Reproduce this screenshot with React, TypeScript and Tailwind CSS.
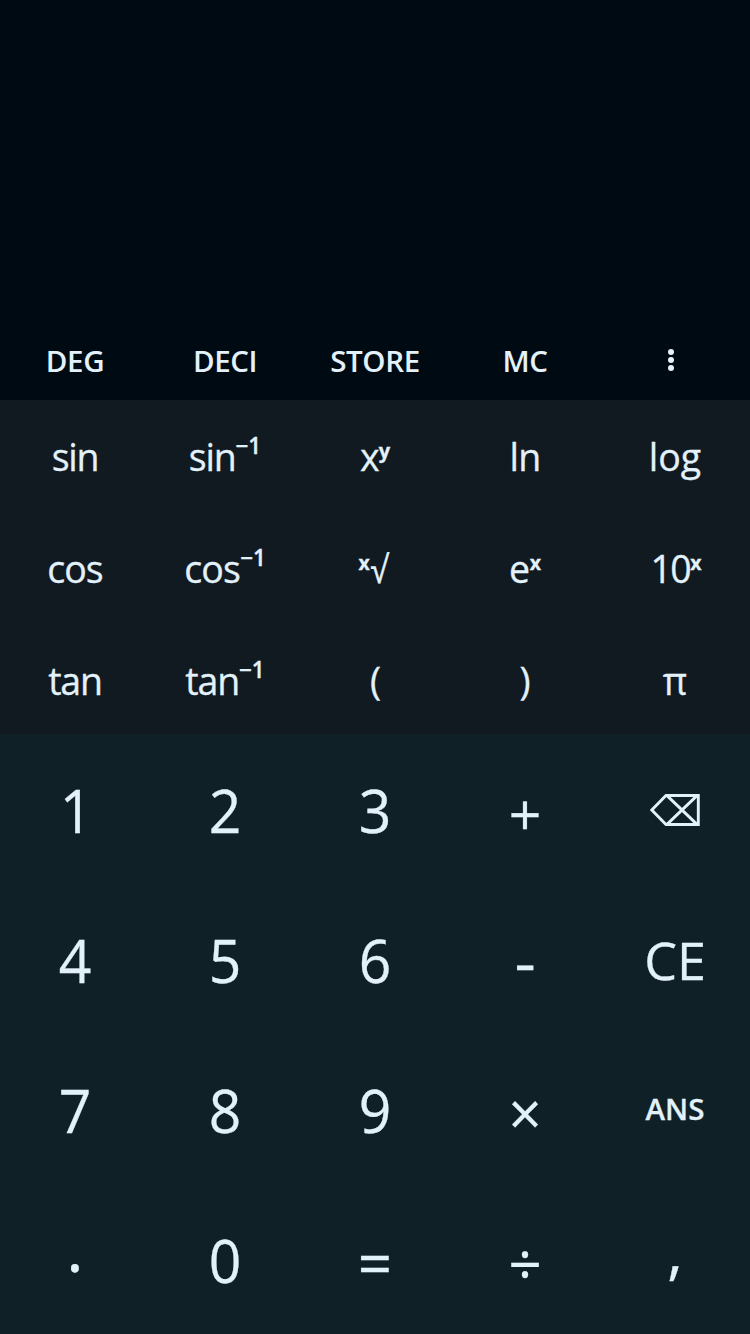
import type { ReactNode } from "react";

type KeyDef = { id: string; face: ReactNode; className?: string };

const Sup = ({ children, className = "" }: { children: ReactNode; className?: string }) => (
  <span className={`inline-block leading-none tracking-normal ${className}`}>{children}</span>
);

const MoreIcon = () => (
  <svg width="6" height="22" viewBox="0 0 6 22" fill="currentColor">
    <circle cx="3" cy="3" r="3" />
    <circle cx="3" cy="11" r="3" />
    <circle cx="3" cy="19" r="3" />
  </svg>
);

const BackspaceIcon = () => (
  <svg width="50" height="32" viewBox="0 0 50 32" fill="none" stroke="currentColor" strokeWidth="2.9">
    <path d="M16 1.5H48.3V30.5H16L1.8 16Z" />
    <path d="M17 1.6L47 30.4M47 1.6L17 30.4" />
  </svg>
);

const modes: KeyDef[] = [
  { id: "deg", face: "DEG" },
  { id: "deci", face: "DECI" },
  { id: "store", face: "STORE" },
  { id: "mc", face: "MC" },
  { id: "more", face: <MoreIcon />, className: "pr-2 pb-[2px]" },
];

const inverse = <Sup className="-translate-y-[17px] text-[22.5px] font-semibold">−1</Sup>;
const supX = <Sup className="-translate-y-[13px] text-[19.5px] font-bold">x</Sup>;

const functions: KeyDef[] = [
  { id: "sin", face: "sin", className: "tracking-[-1.2px]" },
  { id: "asin", face: <span>sin{inverse}</span>, className: "tracking-[-1.2px]" },
  { id: "pow", face: <span>x<Sup className="-translate-y-[13px] text-[20px] font-bold">y</Sup></span>, className: "tracking-[-1px]" },
  { id: "ln", face: "ln", className: "tracking-[-0.7px]" },
  { id: "log", face: "log" },
  { id: "cos", face: "cos", className: "tracking-[-1px]" },
  { id: "acos", face: <span>cos{inverse}</span>, className: "tracking-[-0.8px]" },
  { id: "root", face: <span>{supX}<Sup className="-ml-[1px] -mr-[2px] scale-x-85">√</Sup></span>, className: "pr-1" },
  { id: "exp", face: <span>e{supX}</span>, className: "tracking-[-0.5px]" },
  { id: "exp10", face: <span>10{supX}</span>, className: "pl-[2px] tracking-[-1.5px]" },
  { id: "tan", face: "tan", className: "tracking-[-1.2px]" },
  { id: "atan", face: <span>tan{inverse}</span>, className: "tracking-[-1.2px]" },
  { id: "open", face: "(", className: "pl-[1px]" },
  { id: "close", face: ")" },
  { id: "pi", face: "π" },
];

const digit = "scale-x-95 pt-[2px]";

const digits: KeyDef[] = [
  { id: "1", face: "1", className: "scale-x-95 pt-[2px] pl-[2px]" },
  { id: "2", face: "2", className: digit },
  { id: "3", face: "3", className: digit },
  { id: "plus", face: "+", className: "text-[57px] pt-[8px]" },
  { id: "back", face: <BackspaceIcon />, className: "pt-[2px]" },
  { id: "4", face: "4", className: digit },
  { id: "5", face: "5", className: digit },
  { id: "6", face: "6", className: digit },
  { id: "minus", face: "-", className: "scale-x-110 pt-[3px]" },
  { id: "ce", face: "CE", className: "text-[52px] pt-[2px]" },
  { id: "7", face: "7", className: digit },
  { id: "8", face: "8", className: digit },
  { id: "9", face: "9", className: digit },
  { id: "times", face: "×", className: "text-[58px] pt-[8px]" },
  { id: "ans", face: "ANS", className: "text-[29.5px] font-semibold" },
  { id: "dot", face: ".", className: "text-[66px] pb-[26px]" },
  { id: "0", face: "0", className: digit },
  { id: "equals", face: "=", className: "pt-[5px]" },
  { id: "divide", face: "÷", className: "text-[58px] pt-[8px]" },
  { id: "comma", face: ",", className: "pb-[18px]" },
];

const Keys = ({ keys, className }: { keys: KeyDef[]; className: string }) => (
  <div className={`grid grid-cols-5 ${className}`}>
    {keys.map((k) => (
      <button key={k.id} className={`flex items-center justify-center leading-none whitespace-nowrap ${k.className ?? ""}`}>
        {k.face}
      </button>
    ))}
  </div>
);

export default function App() {
  return (
    <main className="flex h-[1334px] w-[750px] flex-col overflow-hidden bg-[#000a12] font-['Open_Sans','Noto_Sans',sans-serif] text-[#e3f2fa]">
      <div className="h-[322px]" />
      <Keys keys={modes} className="h-[78px] text-[29.5px] font-semibold tracking-[-0.4px]" />
      <Keys keys={functions} className="h-[334px] auto-rows-[112px] bg-[#121a21] pt-[1px] text-[37.5px] [-webkit-text-stroke:0.3px]" />
      <Keys keys={digits} className="h-[600px] auto-rows-[150px] bg-[#102027] text-[60px] [-webkit-text-stroke:0.3px]" />
    </main>
  );
}
